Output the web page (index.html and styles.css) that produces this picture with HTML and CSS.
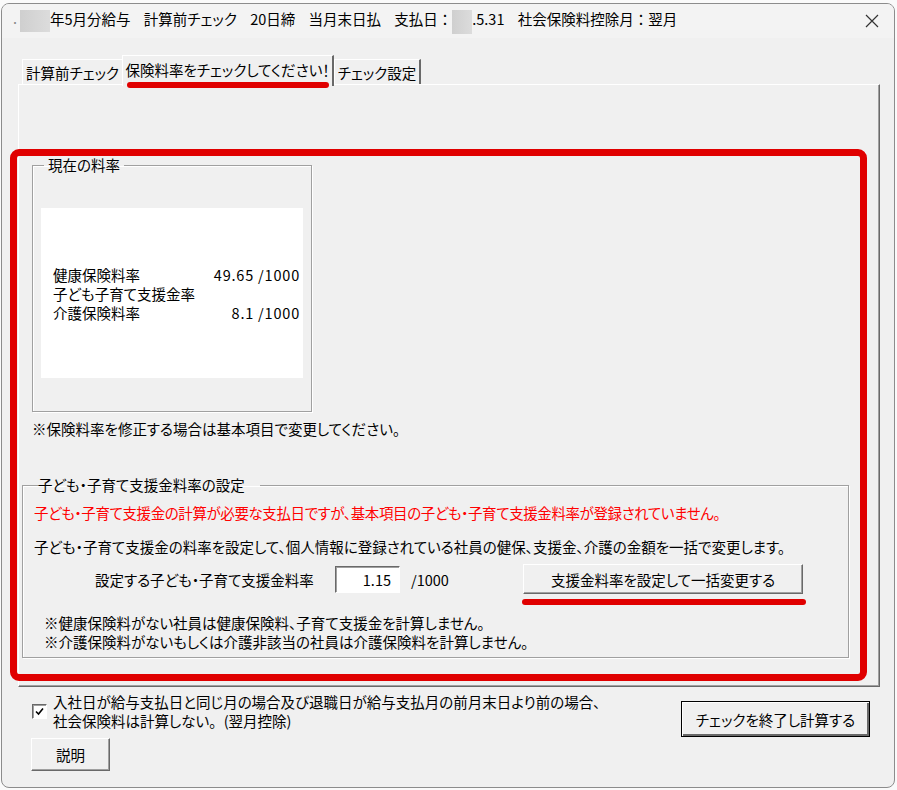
FILE: index.html
```html
<!DOCTYPE html>
<html lang="ja">
<head>
  <meta charset="UTF-8">
  <title>保険料率チェック</title>
  <link rel="stylesheet" href="styles.css">
</head>
<body>

<div class="window">
  <div class="titlebar">
    <span class="dot">·</span>
    <span class="mask mask-year"></span>
    <span class="title">
      <span>年5月分給与</span>
      <span>計算前チェック</span>
      <span>20日締</span>
      <span>当月末日払</span>
      <span>支払日<span class="wide">：</span><span class="mask mask-date"></span>.5.31</span>
      <span>社会保険料控除月<span class="wide">：</span>翌月</span>
    </span>
    <svg class="close" width="14" height="14" viewBox="0 0 14 14">
      <path d="M1 1 L13 13 M13 1 L1 13" stroke="#333" stroke-width="1.2" fill="none"/>
    </svg>
  </div>

  <div class="client">
    <div class="tabs">
      <div class="tab tab-first">計算前チェック</div>
      <div class="tab active">保険料率をチェックしてください！</div>
      <div class="tab tab-last">チェック設定</div>
    </div>

    <div class="panel">
      <fieldset class="group rates">
        <legend>現在の料率</legend>
        <div class="rate-sheet">
          <div class="rate-row"><span>健康保険料率</span><span class="num">49.65 /1000</span></div>
          <div class="rate-row"><span>子ども子育て支援金率</span><span></span></div>
          <div class="rate-row"><span>介護保険料率</span><span class="num">8.1 /1000</span></div>
        </div>
      </fieldset>

      <p class="note">※保険料率を修正する場合は基本項目で変更してください。</p>

      <fieldset class="group support">
        <legend>子ども・子育て支援金料率の設定</legend>
        <p class="warn">子ども・子育て支援金の計算が必要な支払日ですが、基本項目の子ども・子育て支援金料率が登録されていません。</p>
        <p class="desc">子ども・子育て支援金の料率を設定して、個人情報に登録されている社員の健保、支援金、介護の金額を一括で変更します。</p>
        <div class="rate-form">
          <span class="form-label">設定する子ども・子育て支援金料率</span>
          <span class="input">1.15</span>
          <span class="unit">/1000</span>
          <button class="btn btn-apply">支援金料率を設定して一括変更する</button>
        </div>
        <p class="small-notes">※健康保険料がない社員は健康保険料、子育て支援金を計算しません。<br>※介護保険料がないもしくは介護非該当の社員は介護保険料を計算しません。</p>
      </fieldset>
    </div>

    <div class="footer">
      <div class="footer-left">
        <div class="check">
          <span class="checkbox">
            <svg width="9" height="9" viewBox="0 0 9 9"><path d="M1 4.5 L3.5 7 L8 1.5" stroke="#000" stroke-width="1.6" fill="none"/></svg>
          </span>
          <span class="check-text">
            <span class="line">入社日が給与支払日と同じ月の場合及び退職日が給与支払月の前月末日より前の場合、</span>
            <span class="line">社会保険料は計算しない<span class="wide">。</span>(翌月控除)</span>
          </span>
        </div>
        <button class="btn btn-help">説明</button>
      </div>
      <button class="btn btn-main">チェックを終了し計算する</button>
    </div>
  </div>

  <!-- red annotations -->
  <div class="mark mark-frame"></div>
  <div class="mark mark-line mark-tab"></div>
  <div class="mark mark-line mark-btn"></div>
</div>

</body>
</html>
```

FILE: styles.css
```css
body {
  margin: 0;
  background: #fafafa;
  font-family: "Noto Sans CJK JP", "Noto Sans", sans-serif;
  font-size: 14.5px;
  font-feature-settings: "palt";
  color: #000;
}
p { margin: 0; }

.window {
  position: relative;
  margin: 3px 2px 0 1px;
  height: 785px;
  box-sizing: border-box;
  border: 1px solid #8c8c8c;
  border-radius: 8px;
  background: #f0f0f0;
  display: flex;
  flex-direction: column;
  overflow: hidden;
}

/* title bar */
.titlebar {
  height: 34px;
  display: flex;
  align-items: center;
  padding-left: 9px;
  font-size: 14.5px;
  background: #f3f3f3;
}
.dot { color: #888; width: 9px; }
.mask {
  display: inline-block;
  background: linear-gradient(to right, #cfcfcf, #dcdcdc);
  vertical-align: middle;
}
.mask-year { width: 30px; height: 22px; }
.mask-date { width: 20px; height: 24px; }
.title > span { margin-right: 10px; }
.wide { font-feature-settings: normal; }
.close { margin-left: auto; margin-right: 15px; }

/* tabs */
.client {
  flex: 1;
  display: flex;
  flex-direction: column;
  padding-top: 17px;
}
.tabs {
  display: flex;
  align-items: flex-end;
  margin-left: 20px;
  height: 29px;
}
.tab {
  height: 25px;
  line-height: 25px;
  box-sizing: border-box;
  text-align: center;
  border-top: 1px solid #fff;
  border-left: 1px solid #fff;
  border-right: 1px solid #a0a0a0;
  background: #f0f0f0;
}
.tab-first { width: 100px; border-right: none; }
.tab-last { width: 87px; border-right: 2px solid #696969; }
.tab.active {
  width: 212px;
  height: 31px;
  line-height: 27px;
  margin-bottom: -2px;
  position: relative;
  z-index: 1;
  border-right: 2px solid #696969;
}

.panel {
  margin: 0 14px 0 16px;
  height: 603px;
  box-sizing: border-box;
  border: 1px solid;
  border-color: #fff #696969 #696969 #fff;
  box-shadow: inset -1px -1px #a0a0a0;
  padding: 71px 0 0 13px;
}

/* group boxes */
.group {
  margin: 0;
  padding: 0;
  border: 1px solid #a0a0a0;
  box-shadow: inset 1px 1px #fff, 1px 1px #fff;
  min-width: 0;
  box-sizing: border-box;
}
.group legend {
  padding: 0 4px;
  line-height: 18px;
}
.rates { width: 280px; }
.rates legend { margin-left: 11px; }
.rate-sheet {
  margin: 34px 8px 33px 8px;
  height: 170px;
  background: #fff;
  padding: 0 3px 0 12px;
  display: flex;
  flex-direction: column;
  justify-content: center;
}
.rate-row {
  display: flex;
  justify-content: space-between;
  line-height: 19px;
}
.num { letter-spacing: 0.8px; }

.note {
  margin-top: 8px;
  line-height: 18px;
}

.support {
  width: 827px;
  margin: 38px 0 0 -10px;
  padding: 0 0 6px 11px;
}
.support legend { position: relative; left: -11px; margin-left: 11px; }
.warn {
  color: #f00;
  margin-top: 10px;
  line-height: 18px;
  letter-spacing: -0.4px;
}
.desc {
  margin-top: 16px;
  line-height: 18px;
}
.rate-form {
  display: flex;
  align-items: center;
  margin-top: 8px;
  padding-left: 61px;
  height: 30px;
}
.form-label { width: 240px; }
.input {
  width: 65px;
  height: 27px;
  box-sizing: border-box;
  background: #fff;
  border: 1px solid;
  border-color: #696969 #fff #fff #696969;
  box-shadow: inset 1px 1px #a0a0a0;
  text-align: right;
  padding-right: 8px;
  line-height: 25px;
}
.unit { width: 123px; padding-left: 11px; box-sizing: border-box; }

.btn {
  font: inherit;
  font-weight: 400;
  font-feature-settings: "palt";
  color: #000;
  background: #f0f0f0;
  border: 1px solid;
  border-color: #fff #696969 #696969 #fff;
  box-shadow: inset -1px -1px #a0a0a0;
  padding: 0;
  cursor: pointer;
}
.btn-apply { width: 280px; height: 30px; }

.small-notes {
  margin-top: 19px;
  padding-left: 10px;
  line-height: 19px;
}

/* footer */
.footer {
  display: flex;
  justify-content: space-between;
  padding: 5px 24px 0 29px;
}
.check {
  display: flex;
  align-items: center;
  gap: 6px;
  padding-left: 1px;
}
.check-text .line {
  display: block;
  line-height: 19px;
}
.checkbox {
  width: 15px;
  height: 15px;
  box-sizing: border-box;
  background: #fff;
  border: 1px solid;
  border-color: #696969 #fff #fff #696969;
  box-shadow: inset 1px 1px #a0a0a0;
  display: flex;
  align-items: center;
  justify-content: center;
}
.btn-help { width: 79px; height: 33px; margin-top: 8px; }
.btn-main {
  width: 189px;
  height: 36px;
  margin-top: 9px;
  border: 1px solid #000;
  box-shadow: inset 1px 1px #fff, inset -2px -2px #696969;
}

/* red annotation marks */
.mark { position: absolute; z-index: 5; }
.mark-frame {
  left: 8px;
  top: 145px;
  width: 857px;
  height: 532px;
  box-sizing: border-box;
  border: 7px solid #e00000;
  border-radius: 9px;
}
.mark-line {
  height: 6px;
  border-radius: 3px;
  background: #e00000;
}
.mark-tab { left: 125px; top: 78px; width: 202px; }
.mark-btn { left: 520px; top: 595px; width: 284px; }
```
